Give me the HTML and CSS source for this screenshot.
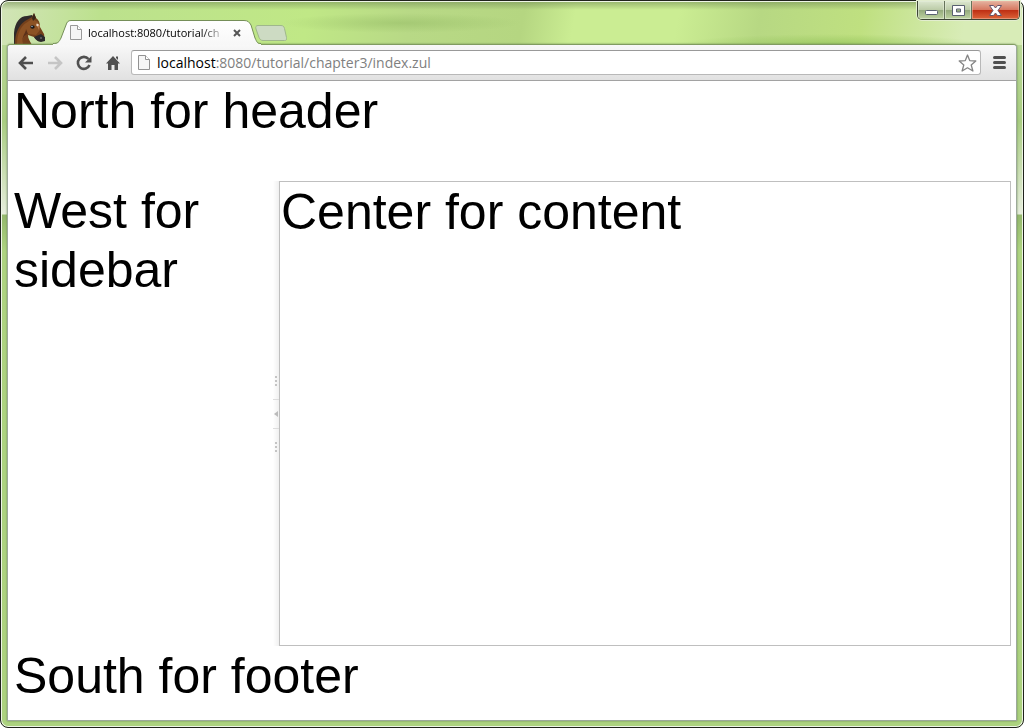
FILE: index.html
```html
<!DOCTYPE html>
<html lang="en">
<head>
<meta charset="utf-8">
<title>localhost:8080/tutorial/chapter3/index.zul</title>
<link rel="stylesheet" href="styles.css">
</head>
<body>
<div class="window">
  <header class="titlebar">
    <svg class="avatar" viewBox="0 0 32 31" aria-hidden="true">
      <path d="M0 31V20C1 9 6 3 13 3l5-1 2 3-6 5-7 7-3 14z" fill="#2f2a2a"/>
      <path d="M1 31C1 20 5 12 11 8l7-4 2-4 2 5c3 2 4 5 4 9l4 7c1 3-1 6-4 7-3 0-4-2-6-4l-6-2c0 4 2 6 4 10z" fill="#74401b"/>
      <path d="M3 31c0-10 4-18 9-21l6-4 6 3 2 8-4 5-7-1c-4 0-7 4-6 10z" fill="#8c5224"/>
      <path d="M9 31c-1-6 1-9 5-10l-2-5c0 4-5 7-3 15z" fill="#5b3119"/>
      <path d="M18 5l2-5 2 5-3 3z" fill="#3a261a"/>
      <path d="M20 24l7-3 4 3v4l-4 1c-3 0-6-3-7-5z" fill="#2b292c"/>
      <path d="M22 10l4 2-1 5-2-4z" fill="#b47848"/>
      <ellipse cx="18.500" cy="14" rx="2.200" ry="1.700" fill="#171719"/>
      <circle cx="18" cy="13.500" r=".8" fill="#9bafc2"/>
      <circle cx="23.500" cy="12" r="1.200" fill="#ead7c5"/>
      <circle cx="27" cy="25" r="1" fill="#69666b"/>
    </svg>
    <div class="tab">
      <svg class="tab-shape" viewBox="0 0 208 25" aria-hidden="true">
        <defs><linearGradient id="tabfill" x2="0" y2="1"><stop stop-color="#fff"/><stop offset="1" stop-color="#f7f7f7"/></linearGradient></defs>
        <path d="M0 25V24C5 24 6 22 8 18L13 5C14 2 15 .5 18 .5H191C195 .5 196 2 198 5L202 18C204 22 204 24 208 24V25Z" fill="url(#tabfill)"/>
        <path d="M0 23.500C5 23.500 6 22 8 18L13 5C14 2 15 .5 18 .5H191C195 .5 196 2 198 5L202 18C204 22 204 23.500 208 23.500" fill="none" stroke="#758e59"/>
      </svg>
      <svg class="page-icon" viewBox="0 0 12 15" aria-hidden="true"><path d="M.5.5h7l4 4v10H.5z" fill="#f5f5f5" stroke="#999"/><path d="M7.500.5v4h4" fill="#fff" stroke="#999"/></svg>
      <span class="tab-title">localhost:8080/tutorial/ch</span>
      <button class="tab-close" type="button" aria-label="Close tab"><svg viewBox="0 0 8 8"><path d="M1 1l6 6M7 1L1 7" stroke="#555" stroke-width="2"/></svg></button>
    </div>
    <button class="new-tab" type="button" aria-label="New tab"><svg viewBox="0 0 32 16"><path d="M3 .5h23c2 0 3 1 3.500 3l2 9c.4 2 0 3-2 3H8c-2 0-3-1-4-3L1 4C.3 2 1 .5 3 .5z" fill="#cddbc3" stroke="#9fb78c"/></svg></button>
    <div class="controls">
      <button class="control" type="button" aria-label="Minimize"><svg viewBox="0 0 13 11"><rect x=".5" y="5.500" width="12" height="4" rx="1" fill="#fff" stroke="#596071"/></svg></button>
      <button class="control" type="button" aria-label="Maximize"><svg viewBox="0 0 13 11"><path d="M.5.5h12v10H.5zM4.500 4v3h4v-3z" fill="#fff" fill-rule="evenodd" stroke="#596071"/></svg></button>
      <button class="control control-close" type="button" aria-label="Close"><svg viewBox="0 0 13 11"><path d="M.5.5h4l2 2.500 2-2.500h4L9 5.500l3.500 5h-4l-2-2.500-2 2.500h-4L4 5.500z" fill="#fff" stroke="#66546a"/></svg></button>
    </div>
  </header>
  <div class="panel">
    <form class="toolbar">
      <button class="tool" type="button" aria-label="Back"><svg viewBox="0 0 16 16"><path d="M8 2L2 8l6 6M2 8h13" fill="none" stroke="#4f4f4f" stroke-width="2.600"/></svg></button>
      <button class="tool" type="button" aria-label="Forward" disabled><svg viewBox="0 0 16 16"><path d="M8 2l6 6-6 6M14 8H1" fill="none" stroke="#c5c5c5" stroke-width="2.600"/></svg></button>
      <button class="tool" type="button" aria-label="Reload"><svg viewBox="0 0 16 16"><path d="M12.500 4A6 6 0 1 0 13.500 10" fill="none" stroke="#505050" stroke-width="2.600"/><path d="M15.500 1v6.500H9z" fill="#505050"/></svg></button>
      <button class="tool" type="button" aria-label="Home"><svg viewBox="0 0 16 16"><path d="M8 1l7 7.500h-2V15H9.500v-5h-3v5H3V8.500H1zM11 1.500h2V5l-2-2z" fill="#505050"/></svg></button>
      <div class="address">
        <svg class="page-icon" viewBox="0 0 12 15" aria-hidden="true"><path d="M.5.5h7l4 4v10H.5z" fill="#f5f5f5" stroke="#929292"/><path d="M7.500.5v4h4" fill="#fff" stroke="#929292"/></svg>
        <span class="url" role="textbox" contenteditable="true" spellcheck="false" aria-label="Address"><span class="host">localhost</span>:8080/tutorial/chapter3/index.zul</span>
        <button class="star" type="button" aria-label="Bookmark"><svg viewBox="0 0 19 18"><path d="M9.500 1l2.200 5.600 6.100.4-4.600 4 1.700 6-5.400-3.200L4.100 17l1.700-6-4.600-4 6.100-.4z" fill="#fff" stroke="#858585" stroke-width="1.300" stroke-linejoin="round"/></svg></button>
      </div>
      <button class="menu" type="button" aria-label="Menu"><svg viewBox="0 0 13 13"><path d="M1.500 1.500h10M1.500 6.500h10M1.500 11.500h10" stroke="#505050" stroke-width="3" stroke-linecap="round"/></svg></button>
    </form>
    <div class="page">
      <header class="north">North for header</header>
      <div class="middle">
        <aside class="west">West for sidebar</aside>
        <div class="splitter">
          <span class="dots"></span>
          <button class="collapse" type="button" aria-label="Collapse sidebar"><svg viewBox="0 0 4 6"><path d="M4 0v6L0 3z" fill="#bbb"/></svg></button>
          <span class="dots"></span>
        </div>
        <main class="center">Center for content</main>
      </div>
      <footer class="south">South for footer</footer>
    </div>
  </div>
</div>
</body>
</html>
```
FILE: styles.css
```css
* { box-sizing: border-box; }
body { margin: 0; background: #fff; }
button { padding: 0; border: 0; background: none; font: inherit; }
svg { display: block; }

.window {
  display: flex;
  flex-direction: column;
  min-height: 100vh;
  padding: 0 6px 6px;
  border: 1px solid #20231c;
  border-radius: 8px;
  box-shadow: inset 0 0 0 1px #eef5e6;
  background:
    linear-gradient(#6f8a5199, #6f8a5100 9px) 0 0 / 100% 20px no-repeat,
    radial-gradient(ellipse 120px 10px at 400px 22px, #8fb76077, #8fb76000) 0 0 / 100% 44px no-repeat,
    radial-gradient(ellipse 150px 10px at 830px 43px, #8dbf5499, #8dbf5400) 0 0 / 100% 44px no-repeat,
    linear-gradient(100deg, #d2e4b8, #bce18d 10%, #c0e886 30%, #b8d986 40%, #b5d681 51%, #cbed93 56%, #cbed93 66%, #b7d883 74%, #bfe080 84%, #d8ecb7 94%) 0 0 / 100% 44px no-repeat,
    linear-gradient(#b9d895 44px, #a9cd82 120px, #e6eddc 213px, #94b86d 214px, #aed481 250px, #acd27f);
}

.titlebar { display: flex; height: 43px; align-items: flex-end; }
.avatar { width: 32px; height: 31px; margin-left: 7px; }
.tab {
  position: relative;
  display: flex;
  align-items: center;
  width: 208px;
  height: 24px;
  margin-left: 7px;
  padding: 1px 20px 0 17px;
}
.tab-shape { position: absolute; z-index: 1; left: 0; top: 0; width: 208px; height: 25px; }
.tab > :not(.tab-shape) { position: relative; z-index: 2; }
.page-icon { flex: none; width: 12px; height: 15px; }
.tab-title {
  margin: 0 auto 0 6px;
  white-space: nowrap;
  font: 11px/16px "Open Sans", sans-serif;
  color: #000;
  mask-image: linear-gradient(90deg, #000 86%, #0004);
}
.tab-close svg { width: 8px; height: 8px; }
.new-tab { margin: 0 0 3px -6px; }
.new-tab svg { width: 32px; height: 16px; }
.controls {
  display: flex;
  align-self: flex-start;
  margin: 0 -3px 0 auto;
  border: 1px solid #3d4534;
  border-top: 0;
  border-radius: 0 0 5px 5px;
  overflow: hidden;
  box-shadow: 0 0 0 1px #e2edcf;
}
.control {
  display: flex;
  align-items: center;
  justify-content: center;
  width: 27px;
  height: 18px;
  border-right: 1px solid #65735a;
  background: linear-gradient(#dce7d0, #bccca8 48%, #93a97b 50%, #bed3a1);
  box-shadow: inset 0 0 0 1px #e5eddb99;
}
.control svg { width: 13px; height: 11px; }
.control-close {
  width: 47px;
  border: 0;
  background: linear-gradient(#e4b3a0, #d77961 48%, #bd2d12 50%, #dc6439);
  box-shadow: inset 0 0 0 1px #efb8a388;
}

.panel {
  display: flex;
  flex: 1;
  flex-direction: column;
  border: 1px solid #9ca99a;
  border-top-color: #809b60;
  border-radius: 4px 4px 0 0;
  background: #fff;
  box-shadow: 0 0 2px #65804e;
}
.toolbar {
  display: flex;
  align-items: center;
  height: 36px;
  padding: 0 10px;
  border-bottom: 1px solid #a2a2a2;
  border-radius: 3px 3px 0 0;
  background: linear-gradient(#f8f8f8, #e1e1e1);
}
.tool { width: 29px; }
.tool svg { width: 16px; height: 16px; }
.address {
  display: flex;
  flex: 1;
  align-items: center;
  height: 25px;
  margin-left: -3px;
  padding: 0 3px 0 6px;
  border: 1px solid #b8b8b8;
  border-top-color: #999;
  border-radius: 3px;
  background: #fff;
}
.url {
  flex: 1;
  margin-left: 7px;
  outline: 0;
  white-space: nowrap;
  font: 14px/20px "Open Sans", sans-serif;
  color: #808080;
}
.host { color: #000; }
.star svg { width: 19px; height: 18px; }
.menu { margin-left: 12px; }
.menu svg { width: 13px; height: 13px; }

.page {
  display: flex;
  flex: 1;
  flex-direction: column;
  padding: 0 5px;
  font: 50px/59px "Liberation Sans", Arial, sans-serif;
  color: #000;
}
.north, .west, .south { padding: 1px 0 0 1px; }
.north { height: 100px; }
.middle { display: flex; flex: 1; }
.west { width: 260px; }
.splitter {
  display: flex;
  flex-direction: column;
  align-items: center;
  justify-content: center;
  gap: 13px;
  width: 6px;
  background: linear-gradient(90deg, #fff, #f0f0f0);
}
.dots {
  width: 2px;
  height: 10px;
  background: repeating-linear-gradient(#c4c4c4 0 2px, transparent 2px 4px);
}
.collapse {
  display: flex;
  align-items: center;
  justify-content: center;
  width: 6px;
  height: 30px;
  border: solid #ddd;
  border-width: 1px 0;
}
.collapse svg { width: 4px; height: 6px; }
.center { flex: 1; padding: 1px; border: 1px solid #bfbfbf; }
.south { height: 74px; }
```
